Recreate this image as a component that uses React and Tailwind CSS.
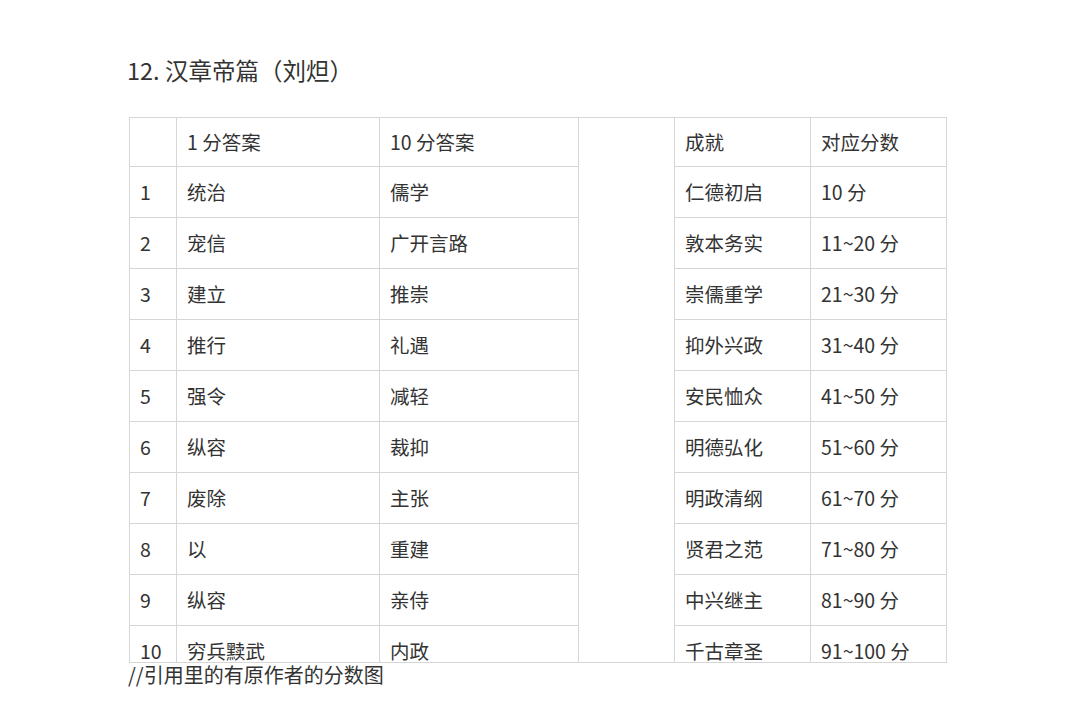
import React from "react";

const rows = [
  ["1", "统治", "儒学", "仁德初启", "10 分"],
  ["2", "宠信", "广开言路", "敦本务实", "11~20 分"],
  ["3", "建立", "推崇", "崇儒重学", "21~30 分"],
  ["4", "推行", "礼遇", "抑外兴政", "31~40 分"],
  ["5", "强令", "减轻", "安民恤众", "41~50 分"],
  ["6", "纵容", "裁抑", "明德弘化", "51~60 分"],
  ["7", "废除", "主张", "明政清纲", "61~70 分"],
  ["8", "以", "重建", "贤君之范", "71~80 分"],
  ["9", "纵容", "亲侍", "中兴继主", "81~90 分"],
  ["10", "穷兵黩武", "内政", "千古章圣", "91~100 分"],
];

const cell = "border border-[#d6d6d6] px-[10px] align-middle font-normal text-left";

export default function App() {
  return (
    <div
      className="min-h-[716px] bg-white text-[#333] pl-[129px] pt-[52px]"
      style={{ fontFamily: '"Noto Sans CJK SC", "Noto Sans", sans-serif' }}
    >
      <h1 className="text-[23.5px] leading-[36px] -ml-[2px] font-normal">12. 汉章帝篇（刘炟）</h1>

      {/* table is cut off at the bottom, as in the source image */}
      <div className="mt-[29px] w-[818px] h-[546px] overflow-hidden border-b border-r border-[#d6d6d6]">
        <table className="border-collapse table-fixed w-[818px] text-[19.5px]">
          <colgroup>
            <col className="w-[47px]" />
            <col className="w-[203px]" />
            <col className="w-[199px]" />
            <col className="w-[96px]" />
            <col className="w-[136px]" />
            <col className="w-[137px]" />
          </colgroup>
          <tbody>
            <tr className="h-[49px]">
              <td className={cell}></td>
              <td className={cell}>1 分答案</td>
              <td className={cell}>10 分答案</td>
              <td className={cell} rowSpan={11}></td>
              <td className={cell}>成就</td>
              <td className={cell}>对应分数</td>
            </tr>
            {rows.map((r) => (
              <tr key={r[0]} className="h-[51px]">
                <td className={cell}>{r[0]}</td>
                <td className={cell}>{r[1]}</td>
                <td className={cell}>{r[2]}</td>
                <td className={cell}>{r[3]}</td>
                <td className={cell}>{r[4]}</td>
              </tr>
            ))}
          </tbody>
        </table>
      </div>

      <p className="text-[20px] leading-[24px] -ml-[1px] mt-0">//引用里的有原作者的分数图</p>
    </div>
  );
}
